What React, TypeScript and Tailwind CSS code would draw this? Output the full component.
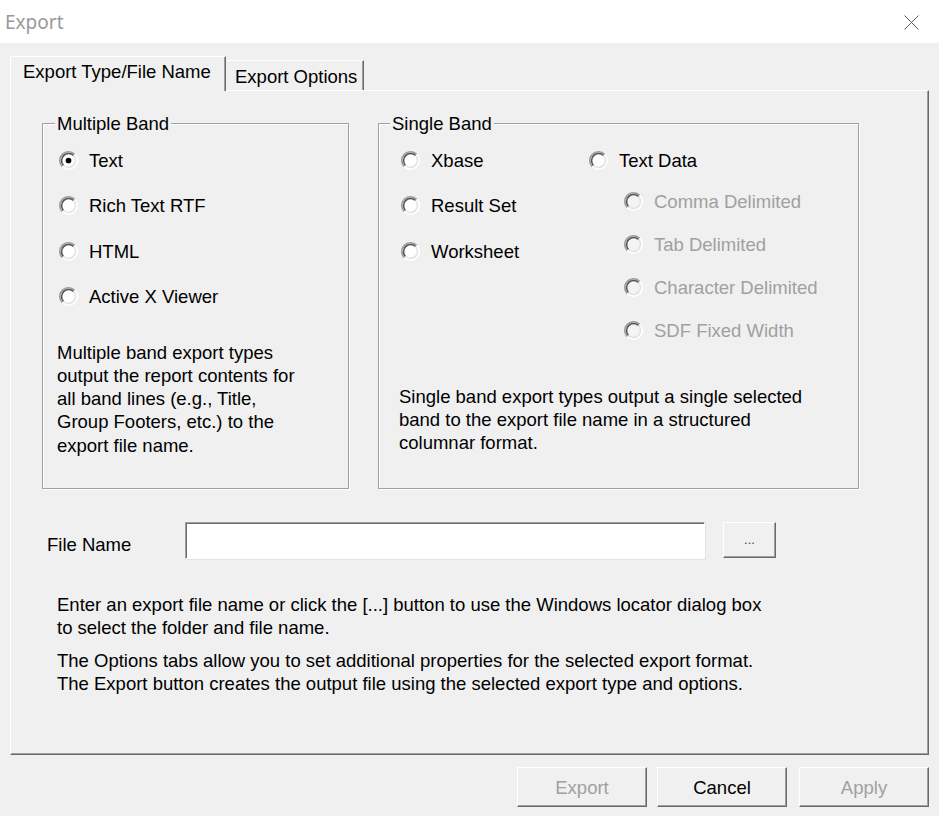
import React from "react";

function Radio({ checked = false, disabled = false }: { checked?: boolean; disabled?: boolean }) {
  return (
    <svg width="19" height="19" viewBox="0 0 12 12" className="shrink-0">
      <circle cx="6" cy="6" r="5" fill={disabled ? "#f4f4f4" : "#ffffff"} />
      <path d="M2.11 9.89A5.5 5.5 0 0 1 9.89 2.11" fill="none" stroke="#9a9a9a" strokeWidth="1" />
      <path d="M2.82 9.18A4.5 4.5 0 0 1 9.18 2.82" fill="none" stroke="#555555" strokeWidth="1" />
      <path d="M9.89 2.11A5.5 5.5 0 0 1 2.11 9.89" fill="none" stroke="#ffffff" strokeWidth="1" />
      <path d="M9.18 2.82A4.5 4.5 0 0 1 2.82 9.18" fill="none" stroke="#e3e3e3" strokeWidth="1" />
      {checked && <circle cx="6" cy="6" r="1.8" fill="#000" />}
    </svg>
  );
}

function RadioRow({ label, checked, disabled }: { label: string; checked?: boolean; disabled?: boolean }) {
  return (
    <div className="flex h-[20px] items-center gap-[11px]">
      <Radio checked={checked} disabled={disabled} />
      <span className={disabled ? "text-[#a0a0a0] whitespace-nowrap" : "text-black whitespace-nowrap"}>{label}</span>
    </div>
  );
}

const raised =
  "bg-[#f0f0f0] border-t border-l border-t-white border-l-white border-r border-b border-r-[#696969] border-b-[#696969] shadow-[inset_-1px_-1px_0_#a0a0a0]";

export default function App() {
  return (
    <div className="w-[939px] h-[816px] bg-[#f0f0f0] font-['Liberation_Sans',Arial,sans-serif] text-[18.5px] leading-[23px] text-black overflow-hidden">
      {/* Title bar */}
      <div className="h-[43px] bg-white flex items-center justify-between pl-[5px] pr-[20px]">
        <span className="font-['Noto_Sans',sans-serif] text-[19px] text-[#999999] leading-[24px]">Export</span>
        <svg width="15" height="15" viewBox="0 0 15 15" className="mt-[1px]">
          <path d="M0.5 0.5L14.5 14.5M14.5 0.5L0.5 14.5" stroke="#5a5a5a" strokeWidth="1" />
        </svg>
      </div>

      {/* Tabs */}
      <div className="flex items-end h-[47px] pl-[10px]">
        <div className="relative z-10 -mb-[1px] h-[35px] w-[216px] bg-[#f0f0f0] border-t border-l border-t-white border-l-white border-r border-r-[#696969] shadow-[inset_-1px_0_0_#a0a0a0] pl-[12px] pt-[3px] whitespace-nowrap">
          Export Type/File Name
        </div>
        <div className="h-[30px] w-[138px] bg-[#f0f0f0] border-t border-t-white border-r border-r-[#696969] shadow-[inset_-1px_0_0_#a0a0a0] pl-[9px] pt-[4px] whitespace-nowrap">
          Export Options
        </div>
      </div>

      {/* Tab panel */}
      <div className="ml-[10px] w-[919px] h-[665px] border-t border-l border-t-white border-l-white border-r border-b border-r-[#696969] border-b-[#696969] shadow-[inset_-1px_-1px_0_#a0a0a0] pt-[32px]">
        <div className="flex gap-[29px] pl-[31px]">
          {/* Multiple Band */}
          <div className="w-[307px] h-[366px] border border-[#a0a0a0] shadow-[1px_1px_0_#fff,inset_1px_1px_0_#fff] flex flex-col">
            <div className="-mt-[12px] ml-[12px] px-[2px] bg-[#f0f0f0] w-fit whitespace-nowrap">Multiple Band</div>
            <div className="mt-[15px] pl-[16px] flex flex-col gap-[25.5px]">
              <RadioRow label="Text" checked />
              <RadioRow label="Rich Text RTF" />
              <RadioRow label="HTML" />
              <RadioRow label="Active X Viewer" />
            </div>
            <p className="mt-[34px] pl-[14px] leading-[23.3px]">
              Multiple band export types
              <br />
              output the report contents for
              <br />
              all band lines (e.g., Title,
              <br />
              Group Footers, etc.) to the
              <br />
              export file name.
            </p>
          </div>

          {/* Single Band */}
          <div className="w-[481px] h-[366px] border border-[#a0a0a0] shadow-[1px_1px_0_#fff,inset_1px_1px_0_#fff] flex flex-col">
            <div className="-mt-[12px] ml-[11px] px-[2px] bg-[#f0f0f0] w-fit whitespace-nowrap">Single Band</div>
            <div className="mt-[15px] pl-[22px] flex">
              <div className="w-[188px] flex flex-col gap-[25.5px]">
                <RadioRow label="Xbase" />
                <RadioRow label="Result Set" />
                <RadioRow label="Worksheet" />
              </div>
              <div className="flex flex-col">
                <RadioRow label="Text Data" />
                <div className="mt-[21.7px] pl-[35px] flex flex-col gap-[22.8px]">
                  <RadioRow label="Comma Delimited" disabled />
                  <RadioRow label="Tab Delimited" disabled />
                  <RadioRow label="Character Delimited" disabled />
                  <RadioRow label="SDF Fixed Width" disabled />
                </div>
              </div>
            </div>
            <p className="mt-[45px] pl-[20px] leading-[23.2px]">
              Single band export types output a single selected
              <br />
              band to the export file name in a structured
              <br />
              columnar format.
            </p>
          </div>
        </div>

        {/* File name row */}
        <div className="mt-[33px] flex items-start pl-[36px]">
          <span className="mt-[10.5px] w-[138px] whitespace-nowrap">File Name</span>
          <div className="w-[520px] h-[37px] bg-white border-t border-l border-t-[#a0a0a0] border-l-[#a0a0a0] border-r border-b border-r-white border-b-white shadow-[inset_1px_1px_0_#696969,1px_1px_0_#e3e3e3]"></div>
          <div className={`ml-[18px] w-[53px] h-[36px] ${raised} flex items-center justify-center text-[13px] text-[#444] pb-[2px]`}>
            ...
          </div>
        </div>

        {/* Help text */}
        <p className="mt-[33.5px] pl-[46px]">
          Enter an export file name or click the [...] button to use the Windows locator dialog box
          <br />
          to select the folder and file name.
        </p>
        <p className="mt-[10px] pl-[46px]">
          The Options tabs allow you to set additional properties for the selected export format.
          <br />
          The Export button creates the output file using the selected export type and options.
        </p>
      </div>

      {/* Buttons */}
      <div className="mt-[12px] flex justify-end pr-[10px]">
        <div className={`w-[130px] h-[40px] ${raised} flex items-center justify-center text-[#a0a0a0]`}>Export</div>
        <div className={`ml-[10px] w-[130px] h-[40px] ${raised} flex items-center justify-center`}>Cancel</div>
        <div className={`ml-[12px] w-[130px] h-[40px] ${raised} flex items-center justify-center text-[#a0a0a0]`}>Apply</div>
      </div>
    </div>
  );
}
